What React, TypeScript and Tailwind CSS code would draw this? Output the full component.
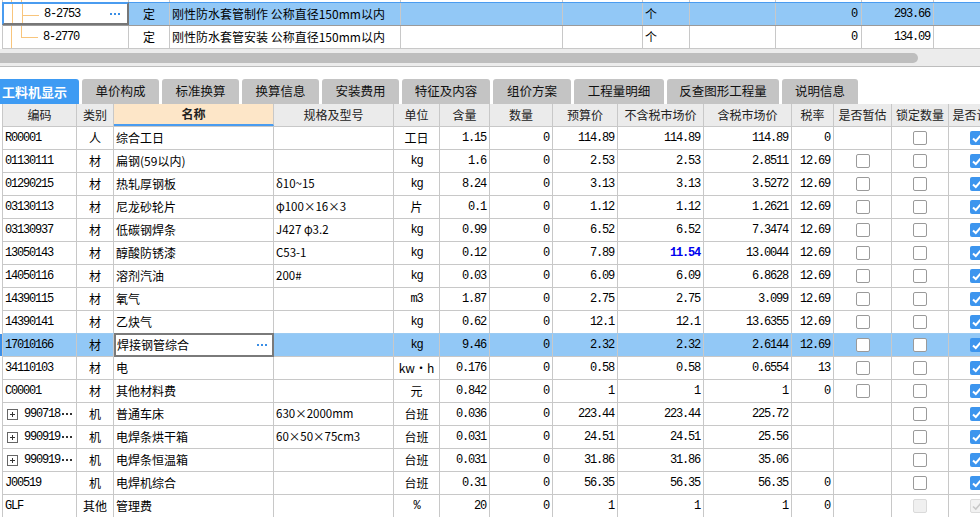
const CJK = "font-['Noto_Sans_CJK_SC',sans-serif]";
const MONO = "font-['Liberation_Mono',monospace] tracking-[-1.2px]";

type Row = {
  code: string;
  plus?: boolean;
  kind: string;
  name: string;
  spec?: string;
  unit: string;
  qty: string;
  budget: string;
  mkt: string;
  mktBlue?: boolean;
  taxMkt: string;
  rate: string;
  est: "none" | "off";
  lock: "off" | "disabled";
  calc: "on" | "disabled";
};

const rows: Row[] = [
  { code: "R00001", kind: "人", name: "综合工日", unit: "工日", qty: "1.15", budget: "114.89", mkt: "114.89", taxMkt: "114.89", rate: "0", est: "none", lock: "off", calc: "on" },
  { code: "01130111", kind: "材", name: "扁钢(59以内)", unit: "kg", qty: "1.6", budget: "2.53", mkt: "2.53", taxMkt: "2.8511", rate: "12.69", est: "off", lock: "off", calc: "on" },
  { code: "01290215", kind: "材", name: "热轧厚钢板", spec: "δ10~15", unit: "kg", qty: "8.24", budget: "3.13", mkt: "3.13", taxMkt: "3.5272", rate: "12.69", est: "off", lock: "off", calc: "on" },
  { code: "03130113", kind: "材", name: "尼龙砂轮片", spec: "φ100×16×3", unit: "片", qty: "0.1", budget: "1.12", mkt: "1.12", taxMkt: "1.2621", rate: "12.69", est: "off", lock: "off", calc: "on" },
  { code: "03130937", kind: "材", name: "低碳钢焊条", spec: "J427  φ3.2", unit: "kg", qty: "0.99", budget: "6.52", mkt: "6.52", taxMkt: "7.3474", rate: "12.69", est: "off", lock: "off", calc: "on" },
  { code: "13050143", kind: "材", name: "醇酸防锈漆", spec: "C53-1", unit: "kg", qty: "0.12", budget: "7.89", mkt: "11.54", mktBlue: true, taxMkt: "13.0044", rate: "12.69", est: "off", lock: "off", calc: "on" },
  { code: "14050116", kind: "材", name: "溶剂汽油", spec: "200#", unit: "kg", qty: "0.03", budget: "6.09", mkt: "6.09", taxMkt: "6.8628", rate: "12.69", est: "off", lock: "off", calc: "on" },
  { code: "14390115", kind: "材", name: "氧气", unit: "m3", qty: "1.87", budget: "2.75", mkt: "2.75", taxMkt: "3.099", rate: "12.69", est: "off", lock: "off", calc: "on" },
  { code: "14390141", kind: "材", name: "乙炔气", unit: "kg", qty: "0.62", budget: "12.1", mkt: "12.1", taxMkt: "13.6355", rate: "12.69", est: "off", lock: "off", calc: "on" },
  { code: "17010166", kind: "材", name: "焊接钢管综合", unit: "kg", qty: "9.46", budget: "2.32", mkt: "2.32", taxMkt: "2.6144", rate: "12.69", est: "off", lock: "off", calc: "on" },
  { code: "34110103", kind: "材", name: "电", unit: "kw・h", qty: "0.176", budget: "0.58", mkt: "0.58", taxMkt: "0.6554", rate: "13", est: "off", lock: "off", calc: "on" },
  { code: "C00001", kind: "材", name: "其他材料费", unit: "元", qty: "0.842", budget: "1", mkt: "1", taxMkt: "1", rate: "0", est: "off", lock: "off", calc: "on" },
  { code: "990718", plus: true, kind: "机", name: "普通车床", spec: "630×2000mm", unit: "台班", qty: "0.036", budget: "223.44", mkt: "223.44", taxMkt: "225.72", rate: "", est: "none", lock: "off", calc: "on" },
  { code: "990919", plus: true, kind: "机", name: "电焊条烘干箱", spec: "60×50×75cm3", unit: "台班", qty: "0.031", budget: "24.51", mkt: "24.51", taxMkt: "25.56", rate: "", est: "none", lock: "off", calc: "on" },
  { code: "990919", plus: true, kind: "机", name: "电焊条恒温箱", unit: "台班", qty: "0.031", budget: "31.86", mkt: "31.86", taxMkt: "35.06", rate: "", est: "none", lock: "off", calc: "on" },
  { code: "J00519", kind: "机", name: "电焊机综合", unit: "台班", qty: "0.31", budget: "56.35", mkt: "56.35", taxMkt: "56.35", rate: "0", est: "none", lock: "off", calc: "on" },
  { code: "GLF", kind: "其他", name: "管理费", unit: "%", qty: "20", budget: "1", mkt: "1", taxMkt: "1", rate: "0", est: "none", lock: "disabled", calc: "disabled" },
];

const SELECTED = 9;

function isLatin(s: string) {
  return /^[\x00-\x7F]+$/.test(s);
}

function Dots() {
  return (
    <svg width="10" height="2" viewBox="0 0 10 2" className="shrink-0">
      <rect x="0" y="0" width="2" height="2" fill="#3a8ee6" />
      <rect x="4" y="0" width="2" height="2" fill="#3a8ee6" />
      <rect x="8" y="0" width="2" height="2" fill="#3a8ee6" />
    </svg>
  );
}

function Checkbox({ kind }: { kind: "off" | "on" | "disabled" | "disabledOn" }) {
  if (kind === "on") {
    return (
      <div className="flex h-[14px] w-[14px] shrink-0 items-center justify-center rounded-[2px] bg-[#3d95ee]">
        <svg width="12" height="12" viewBox="0 0 12 12">
          <path d="M2 6.5 L4.8 9 L10 3.2" fill="none" stroke="white" strokeWidth="2" />
        </svg>
      </div>
    );
  }
  if (kind === "disabledOn") {
    return (
      <div className="flex h-[14px] w-[14px] shrink-0 items-center justify-center rounded-[2px] border border-[#dcdcdc] bg-[#f2f2f2]">
        <svg width="12" height="12" viewBox="0 0 12 12">
          <path d="M2 6.5 L4.8 9 L10 3.2" fill="none" stroke="#c8c8c8" strokeWidth="1.6" />
        </svg>
      </div>
    );
  }
  if (kind === "disabled") {
    return <div className="h-[14px] w-[14px] shrink-0 rounded-[2px] border border-[#dadada] bg-[#f0f0f0]" />;
  }
  return <div className="h-[14px] w-[14px] shrink-0 rounded-[2px] border border-[#9a9a9a] bg-white" />;
}

function TreeLines({ last }: { last?: boolean }) {
  return (
    <>
      <span className="absolute left-[8px] top-0 h-full w-px bg-[#f8c57c]" />
      <span className={`absolute left-[18px] top-0 w-px bg-[#f8c57c] ${last ? "h-[11px]" : "h-full"}`} />
      <span className="absolute left-[18px] top-[11px] h-px w-[17px] bg-[#f8c57c]" />
    </>
  );
}

function TopGrid() {
  return (
    <div className="ml-[2px] border-l border-[#c8c8c8]">
      {/* bottom edge of the row above */}
      <div className="relative flex h-[3px] border-b border-[#4a9cf0]">
        <span className="absolute left-[8px] top-0 h-full w-px bg-[#f8c57c]" />
        <span className="absolute left-[18px] top-0 h-full w-px bg-[#f8c57c]" />
        <div className="w-[126px] border-r border-[#c8c8c8]" />
        <div className="w-[41px] border-r border-[#c8c8c8]" />
        <div className="w-[231px] border-r border-[#c8c8c8]" />
        <div className="w-[162px] border-r border-[#c8c8c8]" />
        <div className="w-[80px] border-r border-[#c8c8c8]" />
        <div className="w-[47px] border-r border-[#c8c8c8]" />
        <div className="w-[86px] border-r border-[#c8c8c8]" />
        <div className="w-[86px] border-r border-[#c8c8c8]" />
        <div className="w-[72px] border-r border-[#c8c8c8]" />
      </div>
      <div className="flex h-[22px] bg-[#92c8f6]">
        <div className="relative -ml-px -mt-px flex w-[127px] items-center border-2 border-t-[#4a9cf0] border-l-[#4a9cf0] border-r-[#777] border-b-[#777] bg-white">
          <TreeLines />
          <span className={`pl-[40px] ${MONO}`}>8-2753</span>
          <span className="ml-auto flex pr-[7px]">
            <Dots />
          </span>
        </div>
        <div className="flex w-[41px] items-center justify-center border-r border-[#c8c8c8]">定</div>
        <div className="flex w-[231px] items-center border-r border-[#c8c8c8] pl-[2px]">刚性防水套管制作 公称直径150mm以内</div>
        <div className="w-[162px] border-r border-[#c8c8c8]" />
        <div className="w-[80px] border-r border-[#c8c8c8]" />
        <div className="flex w-[47px] items-center border-r border-[#c8c8c8] pl-[2px]">个</div>
        <div className="w-[86px] border-r border-[#c8c8c8]" />
        <div className={`flex w-[86px] items-center justify-end border-r border-[#c8c8c8] pr-[4px] ${MONO}`}>0</div>
        <div className={`flex w-[72px] items-center justify-end border-r border-[#c8c8c8] pr-[3px] ${MONO}`}>293.66</div>
      </div>
      <div className="flex h-[24px] border-y border-[#c8c8c8] border-t-[#9a9a9a] bg-white">
        <div className="relative flex w-[126px] items-center border-r border-[#c8c8c8]">
          <TreeLines last />
          <span className={`pl-[40px] ${MONO}`}>8-2770</span>
        </div>
        <div className="flex w-[41px] items-center justify-center border-r border-[#c8c8c8]">定</div>
        <div className="flex w-[231px] items-center border-r border-[#c8c8c8] pl-[2px]">刚性防水套管安装 公称直径150mm以内</div>
        <div className="w-[162px] border-r border-[#c8c8c8]" />
        <div className="w-[80px] border-r border-[#c8c8c8]" />
        <div className="flex w-[47px] items-center border-r border-[#c8c8c8] pl-[2px]">个</div>
        <div className="w-[86px] border-r border-[#c8c8c8]" />
        <div className={`flex w-[86px] items-center justify-end border-r border-[#c8c8c8] pr-[4px] ${MONO}`}>0</div>
        <div className={`flex w-[72px] items-center justify-end border-r border-[#c8c8c8] pr-[3px] ${MONO}`}>134.09</div>
      </div>
    </div>
  );
}

function HScroll() {
  return (
    <div className="flex h-[18px] flex-col border-b border-[#bdbdbd] bg-[#ececec] pt-[4px]">
      <div className="h-[10px] w-[918px] rounded-r-[5px] bg-[#bebebe]" />
    </div>
  );
}

const tabs = [
  { label: "单价构成", w: "w-[77px]" },
  { label: "标准换算", w: "w-[77px]" },
  { label: "换算信息", w: "w-[77px]" },
  { label: "安装费用", w: "w-[77px]" },
  { label: "特征及内容", w: "w-[88px]" },
  { label: "组价方案", w: "w-[78px]" },
  { label: "工程量明细", w: "w-[90px]" },
  { label: "反查图形工程量", w: "w-[112px]" },
  { label: "说明信息", w: "w-[76px]" },
];

function Tabs() {
  return (
    <div className="flex h-[31px] items-end gap-[3px] bg-white">
      <div className="flex h-[25px] w-[79px] items-center rounded-tr-[3px] bg-[#3e9bf3] pl-[2px] text-[13px] font-bold text-white">
        工料机显示
      </div>
      {tabs.map((t) => (
        <div
          key={t.label}
          className={`flex h-[25px] items-center justify-center rounded-t-[3px] bg-[#c4c4c4] text-[12.5px] text-[#111] ${t.w}`}
        >
          {t.label}
        </div>
      ))}
    </div>
  );
}

const cols = [
  { h: "编码", w: "w-[74px]" },
  { h: "类别", w: "w-[37px]" },
  { h: "名称", w: "w-[160px]" },
  { h: "规格及型号", w: "w-[120px]" },
  { h: "单位", w: "w-[46px]" },
  { h: "含量", w: "w-[50px]" },
  { h: "数量", w: "w-[63px]" },
  { h: "预算价", w: "w-[65px]" },
  { h: "不含税市场价", w: "w-[86px]" },
  { h: "含税市场价", w: "w-[88px]" },
  { h: "税率", w: "w-[42px]" },
  { h: "是否暂估", w: "w-[58px]" },
  { h: "锁定数量", w: "w-[57px]" },
  { h: "是否计价", w: "w-[56px]" },
];

function Header() {
  return (
    <div className="flex h-[23px] border-b border-[#c8c8c8] bg-[#ebebeb]">
      {cols.map((c) =>
        c.h === "名称" ? (
          <div
            key={c.h}
            className={`flex shrink-0 items-center justify-center border-b-2 border-r border-b-[#4a9cf0] border-r-[#c8c8c8] bg-[#fde6c8] font-bold text-[#222] ${c.w}`}
          >
            {c.h}
          </div>
        ) : (
          <div
            key={c.h}
            className={`flex shrink-0 items-center justify-center whitespace-nowrap border-r border-[#c8c8c8] text-[#222] ${c.w}`}
          >
            {c.h}
          </div>
        )
      )}
    </div>
  );
}

function Num({ v, w, blue }: { v: string; w: string; blue?: boolean }) {
  return (
    <div
      className={`flex shrink-0 items-center justify-end border-r border-[#c8c8c8] pr-[3px] ${MONO} ${w} ${
        blue ? "font-bold text-[#0000ee]" : ""
      }`}
    >
      {v}
    </div>
  );
}

function MaterialRow({ r, i }: { r: Row; i: number }) {
  const sel = i === SELECTED;
  const before = i === SELECTED - 1;
  return (
    <div
      className={`relative flex h-[23px] border-b ${before ? "border-[#9ccbf2]" : "border-[#c8c8c8]"} ${
        sel ? "bg-[#92c8f6]" : "bg-white"
      }`}
    >
      {sel && <span className="absolute -left-[3px] top-0 h-full w-[2px] bg-[#3d8fe8]" />}
      <div className={`flex w-[74px] shrink-0 items-center overflow-hidden whitespace-nowrap border-r border-[#c8c8c8] pl-[2px] ${MONO}`}>
        {r.plus && (
          <span className="relative mr-[6px] ml-[2px] h-[11px] w-[11px] shrink-0 border border-[#666]">
            <span className="absolute left-[2px] top-[4px] h-px w-[5px] bg-[#333]" />
            <span className="absolute left-[4px] top-[2px] h-[5px] w-px bg-[#333]" />
          </span>
        )}
        {r.code}
        {r.plus && (
          <span className="ml-[2px] flex">
            <svg width="10" height="2" viewBox="0 0 10 2">
              <rect x="0" y="0" width="2" height="2" fill="#333" />
              <rect x="4" y="0" width="2" height="2" fill="#333" />
              <rect x="8" y="0" width="2" height="2" fill="#333" />
            </svg>
          </span>
        )}
      </div>
      <div className="flex w-[37px] shrink-0 items-center justify-center border-r border-[#c8c8c8]">{r.kind}</div>
      {sel ? (
        <div className="-my-px flex w-[160px] shrink-0 items-center border-2 border-[#7a7a7a] bg-white pl-[1px]">
          {r.name}
          <span className="ml-auto flex pr-[5px]">
            <Dots />
          </span>
        </div>
      ) : (
        <div className="flex w-[160px] shrink-0 items-center border-r border-[#c8c8c8] pl-[2px]">{r.name}</div>
      )}
      <div className="flex w-[120px] shrink-0 items-center overflow-hidden whitespace-nowrap border-r border-[#c8c8c8] pl-[2px] text-[11.5px]">
        {r.spec}
      </div>
      <div
        className={`flex w-[46px] shrink-0 items-center justify-center border-r border-[#c8c8c8] ${
          isLatin(r.unit) ? MONO : ""
        }`}
      >
        {r.unit}
      </div>
      <Num v={r.qty} w="w-[50px]" />
      <Num v="0" w="w-[63px]" />
      <Num v={r.budget} w="w-[65px]" />
      <Num v={r.mkt} w="w-[86px]" blue={r.mktBlue} />
      <Num v={r.taxMkt} w="w-[88px]" />
      <Num v={r.rate} w="w-[42px]" />
      <div className="flex w-[58px] shrink-0 items-center justify-center border-r border-[#c8c8c8]">
        {r.est === "off" && <Checkbox kind="off" />}
      </div>
      <div className="flex w-[57px] shrink-0 items-center justify-center border-r border-[#c8c8c8]">
        <Checkbox kind={r.lock === "disabled" ? "disabled" : "off"} />
      </div>
      <div className="flex w-[56px] shrink-0 items-center justify-center">
        <Checkbox kind={r.calc === "disabled" ? "disabledOn" : "on"} />
      </div>
    </div>
  );
}

export default function App() {
  return (
    <div className={`h-[517px] w-[980px] overflow-hidden bg-white text-[12px] leading-none text-black ${CJK}`}>
      <TopGrid />
      <HScroll />
      <div className="h-[6px] bg-white" />
      <Tabs />
      <div className="ml-[2px] w-[1100px] border-l border-[#c8c8c8]">
        <Header />
        {rows.map((r, i) => (
          <MaterialRow key={i} r={r} i={i} />
        ))}
      </div>
      <div className="flex h-[6px] flex-col bg-[#ececec] pt-[1px]">
        <div className="h-[5px] w-[962px] rounded-r-[3px] bg-[#bebebe]" />
      </div>
    </div>
  );
}
